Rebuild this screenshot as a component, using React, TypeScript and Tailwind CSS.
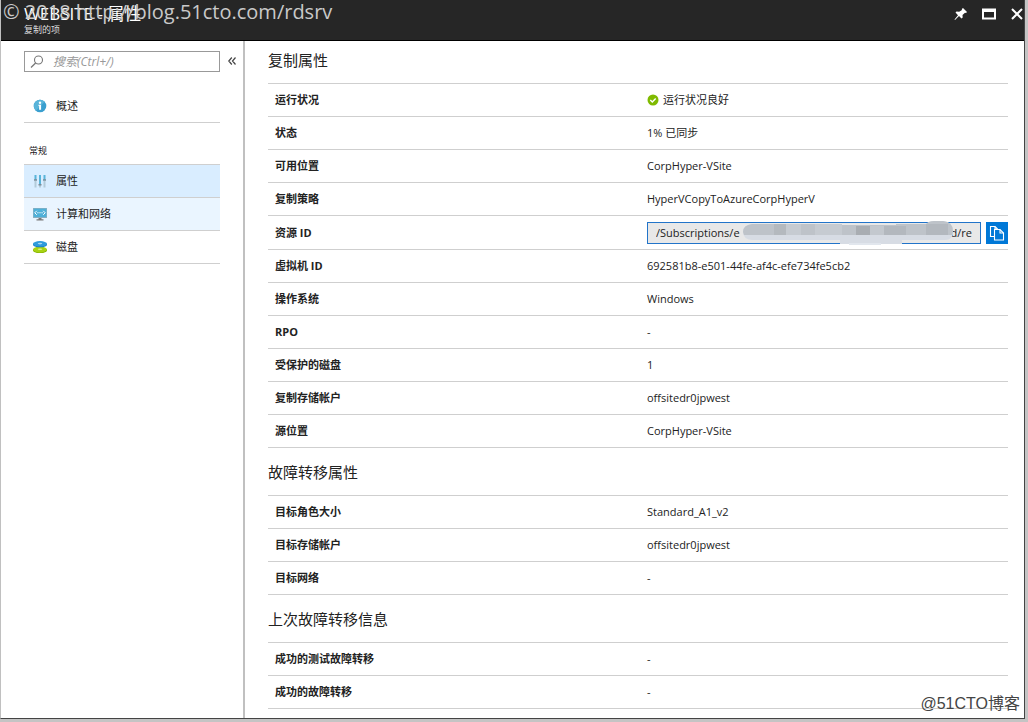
import type { ReactNode } from 'react'

interface Property {
  label: string
  value: ReactNode
}

interface PropertySectionProps {
  title: string
  rows: Property[]
}

function InfoIcon() {
  return (
    <svg className="h-4 w-4" viewBox="0 0 16 16" aria-hidden="true">
      <circle cx="8" cy="8" r="6.3" fill="#3a9fcf" />
      <path d="M3 4.5a6.3 6.3 0 0 1 9.6-.8L4 12.8A6.3 6.3 0 0 1 3 4.5z" fill="#59b4d9" />
      <circle cx="8" cy="4.8" r="1.2" fill="#fff" />
      <path d="M6.5 6.8h2.6v5H7.100V7.900h-.6z" fill="#fff" />
    </svg>
  )
}

function SlidersIcon() {
  return (
    <svg className="h-4 w-4" viewBox="0 0 16 16" aria-hidden="true">
      <path d="M2.500 2h2v5h-2zM7 2h2v9.500H7zM11.500 2h2v5h-2z" fill="#59b4d9" />
      <path d="M2.500 8h2v6.500h-2zM7 12h2v2.500H7zM11.500 8h2v6.500h-2z" fill="#b3cbd9" />
      <path d="M2 6.300h3v1.500H2zM6.500 11h3v1.500h-3zM11 6.300h3v1.500h-3z" fill="#7a8c98" />
    </svg>
  )
}

function MonitorIcon() {
  return (
    <svg className="h-4 w-4" viewBox="0 0 16 16" aria-hidden="true">
      <path d="M1 2h14v10H1z" fill="#9fb0b9" />
      <path d="M1.500 2.500h13v8.800h-13z" fill="#4fb0d8" />
      <path d="M6.500 12h3v1.300h2v1.200h-7v-1.200h2z" fill="#7a7a7a" />
      <path d="M4.800 4.800 2.800 6.800l2 2M11.200 4.800l2 2-2 2" fill="none" stroke="#fff" />
      <path d="M5.300 6.300h1.200v1H5.300zM7.400 6.300h1.200v1H7.400zM9.500 6.300h1.200v1H9.500z" fill="#fff" />
    </svg>
  )
}

function DisksIcon() {
  return (
    <svg className="h-4 w-4" viewBox="0 0 16 16" aria-hidden="true">
      <path d="M1 10.300v1.200c0 1.500 3.100 2.600 7 2.600s7-1.100 7-2.600v-1.200z" fill="#86b300" />
      <ellipse cx="8" cy="10.500" rx="7" ry="2.900" fill="#a8d313" />
      <ellipse cx="8" cy="10.300" rx="2.300" ry=".7" fill="#dff08a" />
      <path d="M1 4.800v.9c0 1.500 3.100 2.600 7 2.600s7-1.100 7-2.600v-.9z" fill="#1b7fc4" />
      <ellipse cx="8" cy="4.800" rx="7" ry="2.700" fill="#2f9bdc" />
      <ellipse cx="8" cy="4.600" rx="2.300" ry=".8" fill="#a7d8f2" />
    </svg>
  )
}

function SearchIcon() {
  return (
    <svg className="h-4 w-4" viewBox="0 0 16 16" fill="none" stroke="#777" aria-hidden="true">
      <circle cx="9.500" cy="6" r="4" strokeWidth="1.100" />
      <path d="M6.600 9 2 13.500" strokeWidth="1.300" />
    </svg>
  )
}

function HealthyIcon() {
  return (
    <svg className="h-3 w-3" viewBox="0 0 12 12" aria-hidden="true">
      <circle cx="6" cy="6" r="5.500" fill="#7fba00" />
      <path d="m3.300 6 2 2 3.400-3.600" fill="none" stroke="#fff" strokeWidth="1.400" />
    </svg>
  )
}

function CopyIcon() {
  return (
    <svg className="h-4 w-4" viewBox="0 0 16 16" fill="none" stroke="#fff" strokeWidth="1.100" aria-hidden="true">
      <path d="M5 11.500H1.500V1.500H6l2.500 2.500" />
      <path d="M6 1.500V4h2.500" />
      <path d="M5.500 4.500H11l3.500 3.500v7h-9z" fill="#0078d7" />
      <path d="M11 4.500V8h3.500" />
    </svg>
  )
}

// Mosaic that hides the middle of the resource path
function Redaction() {
  return (
    <svg className="absolute -top-0.5 left-[95px] h-6 w-[210px]" viewBox="0 0 210 24" aria-hidden="true">
      <path d="M9 3h90v1h54v-1h30q3-3 8-3h9q10 1 10 10 0 9-8 9H159v4H97v-4H9q-9-1-9-8t9-8z" fill="#d7dce4" />
      <path d="M9 3h90v1h54v-1h30q3-3 8-3h9q10 1 10 10l-1 4H1l-1-3q0-7 9-8z" fill="#bec3c9" />
      <path d="M31 3h12v11H31z" fill="#b4b9be" />
      <path d="M43 3h15v11H43zM72 3h27v11H72z" fill="#c6cbd1" />
      <path d="M113 5h14v9h-14z" fill="#a9adb2" />
      <path d="M127 5h14v9h-14z" fill="#c3c8ce" />
      <path d="M141 5h22v9h-22zM183 3h22v11h-22z" fill="#b3b8be" />
      <path d="M106 22h32v2h-32z" fill="#e1e6ed" />
    </svg>
  )
}

function ResourceId() {
  return (
    <div className="flex gap-[5px] pt-1.5 pb-[5px]">
      <div className="relative flex h-[22px] min-w-0 flex-1 items-center border border-[#2274c9] bg-[#e8e8e8] px-2">
        <input
          aria-label="资源 ID"
          readOnly
          value="/Subscriptions/e"
          className="min-w-0 flex-1 bg-transparent outline-none"
        />
        <span>d/re</span>
        <Redaction />
      </div>
      <button type="button" title="复制" className="flex h-[22px] w-[22px] items-center justify-center bg-[#0078d7]">
        <CopyIcon />
      </button>
    </div>
  )
}

function PropertySection({ title, rows }: PropertySectionProps) {
  return (
    <section>
      <h2 className="pb-3 text-[15px] leading-[22px]">{title}</h2>
      <table className="w-full table-fixed border-separate border-spacing-0 border-t border-[#cfcfcf]">
        <tbody>
          {rows.map((row) => (
            <tr key={row.label}>
              <th className="h-[33px] w-1/2 border-b border-[#cfcfcf] pl-[7px] text-left font-bold">{row.label}</th>
              <td className="h-[33px] border-b border-[#cfcfcf] pl-[9px]">{row.value}</td>
            </tr>
          ))}
        </tbody>
      </table>
    </section>
  )
}

function NavItem({ icon, label, className = '' }: { icon: ReactNode; label: string; className?: string }) {
  return (
    <a href="#" className={`flex h-[33px] items-center gap-2 border-b border-[#cfcfcf] px-2 ${className}`}>
      {icon}
      {label}
    </a>
  )
}

const replication: Property[] = [
  {
    label: '运行状况',
    value: (
      <span className="flex items-center gap-1">
        <HealthyIcon />
        运行状况良好
      </span>
    ),
  },
  { label: '状态', value: '1% 已同步' },
  { label: '可用位置', value: 'CorpHyper-VSite' },
  { label: '复制策略', value: 'HyperVCopyToAzureCorpHyperV' },
  { label: '资源 ID', value: <ResourceId /> },
  { label: '虚拟机 ID', value: '692581b8-e501-44fe-af4c-efe734fe5cb2' },
  { label: '操作系统', value: 'Windows' },
  { label: 'RPO', value: '-' },
  { label: '受保护的磁盘', value: '1' },
  { label: '复制存储帐户', value: 'offsitedr0jpwest' },
  { label: '源位置', value: 'CorpHyper-VSite' },
]

const failover: Property[] = [
  { label: '目标角色大小', value: 'Standard_A1_v2' },
  { label: '目标存储帐户', value: 'offsitedr0jpwest' },
  { label: '目标网络', value: '-' },
]

const lastFailover: Property[] = [
  { label: '成功的测试故障转移', value: '-' },
  { label: '成功的故障转移', value: '-' },
]

export default function App() {
  return (
    <div className="flex min-h-screen bg-[#c4c4c4] pr-[3px] pb-[3px] font-['Open_Sans','Noto_Sans_CJK_SC',sans-serif] text-[11px] leading-4 text-[#222]">
      <div className="relative flex flex-1 flex-col border-r border-b border-l border-r-[#444] border-b-[#444] border-l-[#c0c0c0] bg-white">
        <header className="flex h-[41px] justify-between border-b border-black bg-[#262626] pl-[23px] text-white">
          <div>
            <h1 className="pt-1 text-[17px] leading-5">WEBSITE - 属性</h1>
            <p className="text-[9px] leading-3 text-[#ddd]">复制的项</p>
          </div>
          <div className="flex h-7 items-center gap-3">
            <button type="button" title="固定">
              <svg className="h-4 w-4" viewBox="0 0 16 16" fill="#fff" aria-hidden="true">
                <path d="m11 2 4 4-1 1-1-.3-2.500 2.300.2 2.500-1.200 1L7 10l-4 4-.5-.5L6 9.200 3.500 6.500l1-1 2.700.2L10 4 9.800 3z" />
              </svg>
            </button>
            <button type="button" title="最大化">
              <svg className="h-4 w-4" viewBox="0 0 16 16" aria-hidden="true">
                <path fillRule="evenodd" d="M2 2.500h14v11H2zM4 6v5.500h10V6z" fill="#fff" />
              </svg>
            </button>
            <button type="button" title="关闭">
              <svg className="h-4 w-4" viewBox="0 0 16 16" stroke="#fff" strokeWidth="2" aria-hidden="true">
                <path d="m4 3 10 10M14 3 4 13" />
              </svg>
            </button>
          </div>
        </header>

        <div className="flex flex-1">
          <nav className="flex w-[244px] shrink-0 border-r-2 border-[#c0c0c0] pt-2.5 pl-[23px]">
            <div className="w-[196px]">
              <label className="flex h-[21px] items-center border border-[#999] px-1">
                <SearchIcon />
                <input
                  type="search"
                  aria-label="搜索"
                  placeholder="搜索(Ctrl+/)"
                  className="ml-2 min-w-0 flex-1 text-xs italic outline-none placeholder:text-[#999]"
                />
              </label>
              <div className="pt-[18px]">
                <NavItem icon={<InfoIcon />} label="概述" />
              </div>
              <h3 className="border-b border-[#cfcfcf] pt-5 pb-[5px] pl-[5px] text-[9px]">常规</h3>
              <NavItem icon={<SlidersIcon />} label="属性" className="bg-[#d9edff]" />
              <NavItem icon={<MonitorIcon />} label="计算和网络" className="bg-[#eaf5ff]" />
              <NavItem icon={<DisksIcon />} label="磁盘" />
            </div>
            <button type="button" title="折叠" className="flex h-5 flex-1 items-center justify-center">
              <svg className="h-2 w-2" viewBox="0 0 8 8" fill="none" stroke="#444" strokeWidth="1.200" aria-hidden="true">
                <path d="M3.800.5.800 4l3 3.500M7.500.5l-3 3.500 3 3.500" />
              </svg>
            </button>
          </nav>

          <main className="min-w-0 flex-1 space-y-[13px] pt-2 pr-4 pl-[23px]">
            <PropertySection title="复制属性" rows={replication} />
            <PropertySection title="故障转移属性" rows={failover} />
            <PropertySection title="上次故障转移信息" rows={lastFailover} />
          </main>
        </div>

        <p className="pointer-events-none absolute top-0 left-0.5 text-xl leading-6 text-[#c9c9c9]">
          © 2018 http://blog.51cto.com/rdsrv
        </p>
        <p className="pointer-events-none absolute right-1 bottom-1 font-['Liberation_Sans','Noto_Sans_CJK_SC',sans-serif] text-base leading-5 text-[#444]">
          @51CTO博客
        </p>
      </div>
    </div>
  )
}
